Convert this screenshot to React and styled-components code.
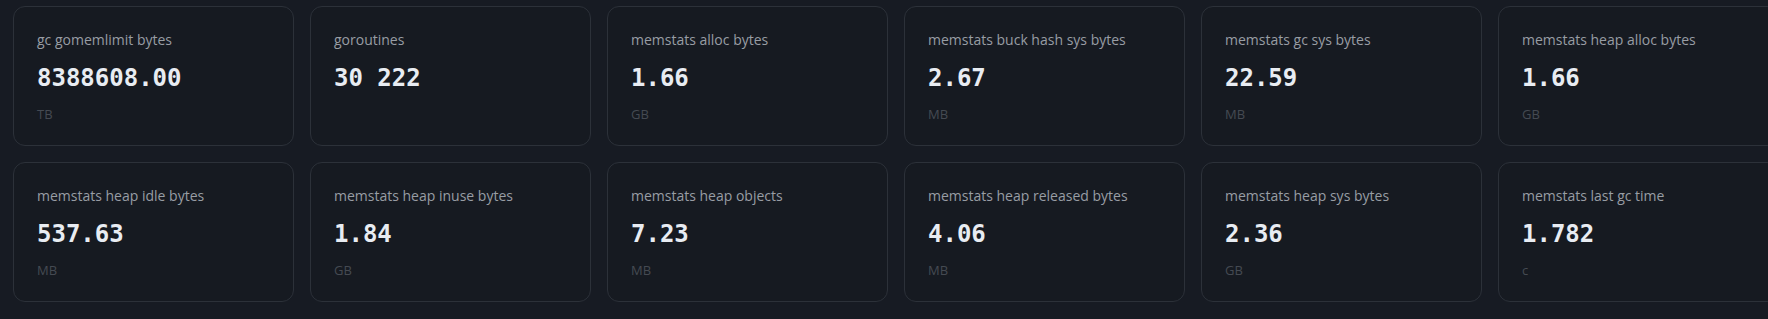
import React from 'react';
import styled, { createGlobalStyle } from 'styled-components';

const metrics = [
    { name: 'gc gomemlimit bytes', value: '8388608.00', unit: 'TB' },
    { name: 'goroutines', value: '30 222', unit: '' },
    { name: 'memstats alloc bytes', value: '1.66', unit: 'GB' },
    { name: 'memstats buck hash sys bytes', value: '2.67', unit: 'MB' },
    { name: 'memstats gc sys bytes', value: '22.59', unit: 'MB' },
    { name: 'memstats heap alloc bytes', value: '1.66', unit: 'GB' },
    { name: 'memstats heap idle bytes', value: '537.63', unit: 'MB' },
    { name: 'memstats heap inuse bytes', value: '1.84', unit: 'GB' },
    { name: 'memstats heap objects', value: '7.23', unit: 'MB' },
    { name: 'memstats heap released bytes', value: '4.06', unit: 'MB' },
    { name: 'memstats heap sys bytes', value: '2.36', unit: 'GB' },
    { name: 'memstats last gc time', value: '1.782', unit: 'c' },
];

const GlobalStyle = createGlobalStyle`
    html, body {
        margin: 0;
        background: #171b23;
        overflow: hidden;
    }
`;

const Grid = styled.div`
    display: grid;
    grid-template-columns: repeat(6, 281px);
    gap: 16px;
    padding: 6px 0 0 13px;
`;

const Card = styled.div`
    box-sizing: border-box;
    height: 140px;
    padding: 23px;
    display: flex;
    flex-direction: column;
    background: #161a21;
    border: 1px solid #2c3139;
    border-radius: 12px;
`;

const Label = styled.div`
    font-family: "Open Sans", "Liberation Sans", sans-serif;
    font-size: 14px;
    line-height: 20px;
    color: #989da4;
    white-space: nowrap;
`;

const Value = styled.div`
    margin-top: 12px;
    font-family: "DejaVu Sans Mono", "Liberation Mono", monospace;
    font-weight: bold;
    font-size: 24px;
    line-height: 32px;
    color: #e8ecf2;
`;

const Unit = styled.div`
    margin-top: 11px;
    min-height: 18px;
    font-family: "Open Sans", "Liberation Sans", sans-serif;
    font-size: 13px;
    line-height: 18px;
    color: #454a52;
`;

const MetricCard = ({ data }) => (
    <Card>
        <Label>{data.name}</Label>
        <Value>{data.value}</Value>
        <Unit>{data.unit}</Unit>
    </Card>
);

const App = () => (
    <>
        <GlobalStyle />
        <Grid>
            {metrics.map((m) => <MetricCard key={m.name} data={m} />)}
        </Grid>
    </>
);

export default App;
